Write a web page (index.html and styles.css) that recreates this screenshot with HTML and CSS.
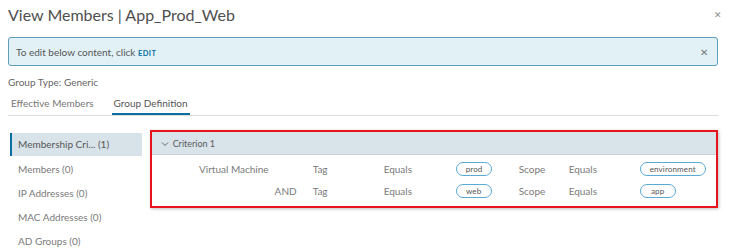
FILE: index.html
```html
<!DOCTYPE html>
<html lang="en">
<head>
  <meta charset="UTF-8" />
  <title>View Members | App_Prod_Web</title>
  <link rel="stylesheet" href="styles.css">
</head>
<body>
  <div class="modal">
    <div class="modal-header">
      <h1>View Members | App_Prod_Web</h1>
      <span class="close">&#x2715;</span>
    </div>

    <div class="alert">
      <span>To edit below content, click <a class="edit">EDIT</a></span>
      <span class="alert-close">&#x2715;</span>
    </div>

    <div class="group-type">Group Type: Generic</div>

    <div class="tabs">
      <span class="tab">Effective Members</span>
      <span class="tab active">Group Definition</span>
    </div>

    <div class="content">
      <ul class="nav">
        <li class="active">Membership Cri... (1)</li>
        <li>Members (0)</li>
        <li>IP Addresses (0)</li>
        <li>MAC Addresses (0)</li>
        <li>AD Groups (0)</li>
      </ul>

      <div class="criteria">
        <div class="crit-header">
          <svg class="chevron" width="8" height="6" viewBox="0 0 8 6"><path d="M1 1.5 L4 4.5 L7 1.5" fill="none" stroke="#666" stroke-width="1"/></svg>
          Criterion 1
        </div>
        <div class="crit-rows">
          <span class="right">Virtual Machine</span>
          <span></span>
          <span>Tag</span>
          <span>Equals</span>
          <span><span class="pill">prod</span></span>
          <span>Scope</span>
          <span>Equals</span>
          <span><span class="pill">environment</span></span>

          <span></span>
          <span class="right and">AND</span>
          <span>Tag</span>
          <span>Equals</span>
          <span><span class="pill">web</span></span>
          <span>Scope</span>
          <span>Equals</span>
          <span><span class="pill">app</span></span>
        </div>
      </div>
    </div>
  </div>
</body>
</html>
```

FILE: styles.css
```css
body {
  margin: 0;
  font-family: 'Lato', sans-serif;
  color: #565656;
  background: #fff;
}
.modal {
  width: 710px;
  padding: 0 12px 0 8px;
}
.modal-header {
  display: flex;
  justify-content: space-between;
  align-items: center;
  height: 28px;
}
.modal-header h1 {
  margin: 0;
  font-size: 16px;
  font-weight: 400;
  color: #4f4f4f;
}
.close {
  font-size: 9px;
  color: #8c8c8c;
  margin-right: -4px;
}
.alert {
  margin-top: 9px;
  height: 27px;
  border: 1px solid #5d9fbd;
  border-radius: 3px;
  background: #e1f1f6;
  display: flex;
  align-items: center;
  justify-content: space-between;
  padding: 0 9px 0 7px;
  font-size: 10px;
  color: #565656;
}
.edit {
  color: #0a6fa0;
  font-size: 7.5px;
  font-weight: 700;
  letter-spacing: 0.4px;
}
.alert-close {
  font-size: 10px;
  color: #777;
}
.group-type {
  margin-top: 10px;
  font-size: 10px;
  color: #666;
}
.tabs {
  display: flex;
  gap: 18px;
  border-bottom: 1px solid #dcdcdc;
  margin-top: 6px;
  padding-left: 3px;
}
.tab {
  font-size: 10px;
  color: #777;
  padding: 3px 0 4px;
  border-bottom: 2px solid transparent;
}
.tab.active {
  color: #565656;
  border-bottom-color: #0a6fa0;
  padding: 3px 2px 4px;
}
.content {
  display: flex;
  align-items: flex-start;
  gap: 8px;
  margin-top: 14px;
}
.nav {
  list-style: none;
  margin: 3px 0 0 2px;
  padding: 0;
  width: 132px;
}
.nav li {
  height: 24px;
  line-height: 24px;
  padding-left: 6px;
  font-size: 10px;
  color: #7a7a7a;
  border-left: 2px solid transparent;
}
.nav li.active {
  background: #d8e3e9;
  border-left-color: #0a6fa0;
  color: #565656;
  height: 23px;
  line-height: 23px;
  margin-bottom: 1px;
}
.criteria {
  width: 566px;
  border: 2px solid #e8141b;
  box-shadow: 1px 1px 3px rgba(0, 0, 0, 0.25);
  padding-bottom: 4px;
}
.crit-header {
  background: #d9e3ea;
  height: 22px;
  display: flex;
  align-items: center;
  gap: 4px;
  padding-left: 9px;
  font-size: 9px;
  color: #5a5a5a;
  border-bottom: 1px solid #c8d2d8;
}
.chevron {
  margin-top: 1px;
}
.crit-rows {
  display: grid;
  grid-template-columns: 120px 41px 71px 72px 63px 50px 71px 1fr;
  grid-auto-rows: 22px;
  align-items: center;
  font-size: 10px;
  color: #7a7a7a;
  padding-top: 3px;
}
.right {
  text-align: right;
  padding-right: 3px;
}
.right.and {
  padding-right: 16px;
}
.pill {
  display: inline-block;
  box-sizing: border-box;
  min-width: 36px;
  text-align: center;
  border: 1px solid #5aaad6;
  border-radius: 8px;
  height: 14px;
  line-height: 12px;
  padding: 0 9px;
  font-size: 8px;
  color: #555;
  letter-spacing: 0.15px;
}
```
